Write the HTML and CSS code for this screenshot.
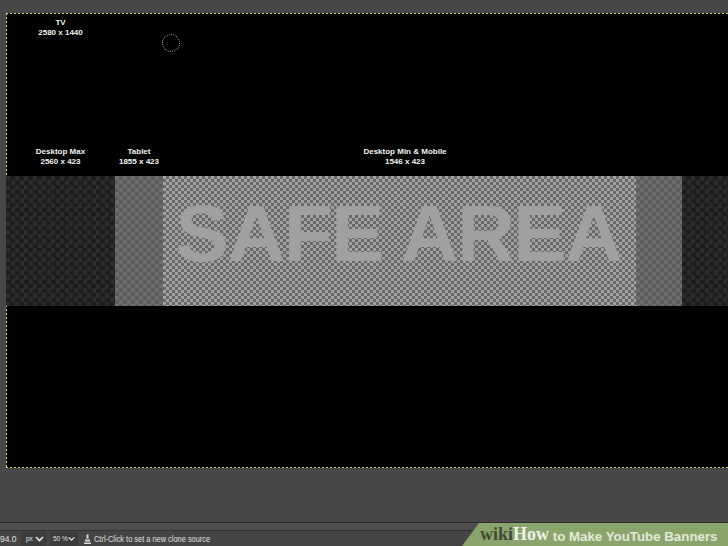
FILE: index.html
```html
<!DOCTYPE html>
<html>
<head>
<meta charset="utf-8">
<link rel="stylesheet" href="styles.css">
</head>
<body>
<div class="app">
  <div class="workspace">
    <div class="canvas">
      <div class="lbl tv">TV<br>2580 x 1440</div>
      <div class="lbl l-max">Desktop Max<br>2560 x 423</div>
      <div class="lbl l-tab">Tablet<br>1855 x 423</div>
      <div class="lbl l-min">Desktop Min &amp; Mobile<br>1546 x 423</div>
      <div class="seg dark c1"></div>
      <div class="seg mid c2"></div>
      <div class="seg safe c3"><span class="safe-text">SAFE AREA</span></div>
      <div class="seg mid c4"></div>
      <div class="seg dark c5"></div>
      <div class="brush"></div>
    </div>
  </div>
  <div class="statusbar">
    <div class="strip"></div>
    <div class="bar">
      <span class="coord">94.0</span>
      <span class="combo unit">px <svg width="9" height="6" viewBox="0 0 9 6"><path d="M1 1 L4.5 4.5 L8 1" fill="none" stroke="#e6e6e6" stroke-width="1.6"/></svg></span>
      <span class="combo zoom">50&nbsp;% <svg width="9" height="6" viewBox="0 0 9 6"><path d="M1 1 L4.5 4.5 L8 1" fill="none" stroke="#e6e6e6" stroke-width="1.6"/></svg></span>
      <svg class="stamp" width="7" height="10" viewBox="0 0 7 10"><rect x="2.5" y="0.5" width="2" height="4" fill="#ddd"/><path d="M1 5.5 H6 V7.5 H1 Z" fill="#ddd"/><rect x="0" y="8.5" width="7" height="1.5" fill="#ddd"/></svg>
      <span class="msg">Ctrl-Click to set a new clone source</span>
    </div>
  </div>
  <div class="watermark"><span class="wiki">wiki</span><span class="how">How</span><span class="title"> to Make YouTube Banners</span></div>
</div>
</body>
</html>
```
FILE: styles.css
```css
html, body {
  margin: 0;
  padding: 0;
}
body {
  width: 728px;
  height: 546px;
  overflow: hidden;
  background: #474747;
  font-family: "Liberation Sans", Arial, sans-serif;
}
.app {
  position: relative;
  width: 728px;
  height: 546px;
  display: flex;
  flex-direction: column;
}
.workspace {
  height: 522px;
  flex: none;
  padding-top: 13px;
  box-sizing: border-box;
  padding-left: 6px;
  overflow: hidden;
}
.canvas {
  position: relative;
  width: 740px;
  height: 455px;
  display: grid;
  grid-template-columns: 109px 48px 473px 46px 1fr;
  grid-template-rows: 163px 130px 1fr;
  background:
    repeating-linear-gradient(90deg, #d2d27a 0 2px, #111 2px 4px) top left / 100% 1px no-repeat,
    repeating-linear-gradient(90deg, #d2d27a 0 2px, #111 2px 4px) bottom left / 100% 1px no-repeat,
    repeating-linear-gradient(180deg, #d2d27a 0 2px, #111 2px 4px) top left / 1px 100% no-repeat,
    #000;
}
.lbl {
  color: #f2f2f2;
  font-size: 8px;
  font-weight: bold;
  line-height: 9.5px;
  text-align: center;
  grid-row: 1;
}
.tv {
  grid-column: 1;
  align-self: start;
  padding-top: 5px;
}
.l-max {
  grid-column: 1;
  align-self: end;
  padding-bottom: 10px;
}
.l-tab {
  grid-column: 2;
  align-self: end;
  padding-bottom: 10px;
}
.l-min {
  grid-column: 3;
  align-self: end;
  padding-bottom: 10px;
  padding-left: 11px;
}
.seg {
  grid-row: 2;
}
.c1 { grid-column: 1; }
.c2 { grid-column: 2; }
.c3 { grid-column: 3; }
.c4 { grid-column: 4; }
.c5 { grid-column: 5; }
.dark {
  background: repeating-conic-gradient(#1d1d1d 0 25%, #2b2b2b 0 50%) 0 0 / 9px 9px;
}
.mid {
  background: repeating-conic-gradient(#5c5c5c 0 25%, #6c6c6c 0 50%) 0 0 / 8px 8px;
}
.safe {
  background: repeating-conic-gradient(#686868 0 25%, #a2a2a2 0 50%) 0 0 / 6px 6px;
  display: flex;
  align-items: center;
  justify-content: center;
  padding-bottom: 15px;
  padding-right: 2px;
  box-sizing: border-box;
}
.safe-text {
  font-size: 80px;
  font-weight: bold;
  line-height: 1;
  letter-spacing: -1.5px;
  color: #a0a0a0;
  white-space: nowrap;
}
.brush {
  position: absolute;
  left: 156px;
  top: 21px;
  width: 16px;
  height: 16px;
  border: 1px dotted #b0b0b0;
  border-radius: 50%;
}
.statusbar {
  flex: none;
  height: 24px;
  border-top: 1px solid #2c2c2c;
  box-sizing: border-box;
  display: flex;
  flex-direction: column;
}
.strip {
  height: 7px;
  background: #4f4f4f;
  border-bottom: 1px solid #333;
}
.bar {
  flex: 1;
  background: #454545;
  display: flex;
  align-items: center;
  color: #e0e0e0;
  font-size: 9px;
  white-space: nowrap;
}
.coord {
  margin-left: 0;
  width: 21px;
  font-size: 8.5px;
}
.combo {
  display: flex;
  align-items: center;
  justify-content: space-between;
  height: 14px;
  padding: 0 3px 0 5px;
  box-sizing: border-box;
  background: #3c3c3c;
  border-radius: 2px;
  font-size: 6.5px;
  margin-right: 3px;
  white-space: nowrap;
}
.unit { width: 26px; }
.zoom { width: 28px; padding-left: 3px; }
.stamp {
  margin-left: 3px;
  margin-right: 3px;
}
.msg {
  font-size: 9.5px;
  display: inline-block;
  transform: scaleX(0.78);
  transform-origin: left center;
  white-space: nowrap;
}
.watermark {
  position: absolute;
  right: 0;
  bottom: 0;
  width: 266px;
  height: 23px;
  background: #8aa56b;
  clip-path: polygon(17px 0, 100% 0, 100% 100%, 0 100%);
  box-sizing: border-box;
  padding-left: 18px;
  display: flex;
  align-items: flex-end;
  padding-bottom: 3px;
  line-height: 1;
  white-space: nowrap;
}
.wiki {
  font-family: "Liberation Serif", "Times New Roman", serif;
  font-weight: bold;
  font-size: 18px;
  color: #3f4a36;
}
.how {
  font-family: "Liberation Serif", "Times New Roman", serif;
  font-weight: bold;
  font-size: 18px;
  color: #eef2e8;
}
.title {
  font-weight: bold;
  font-size: 13.3px;
  color: #e3eadb;
  white-space: pre;
}
```
